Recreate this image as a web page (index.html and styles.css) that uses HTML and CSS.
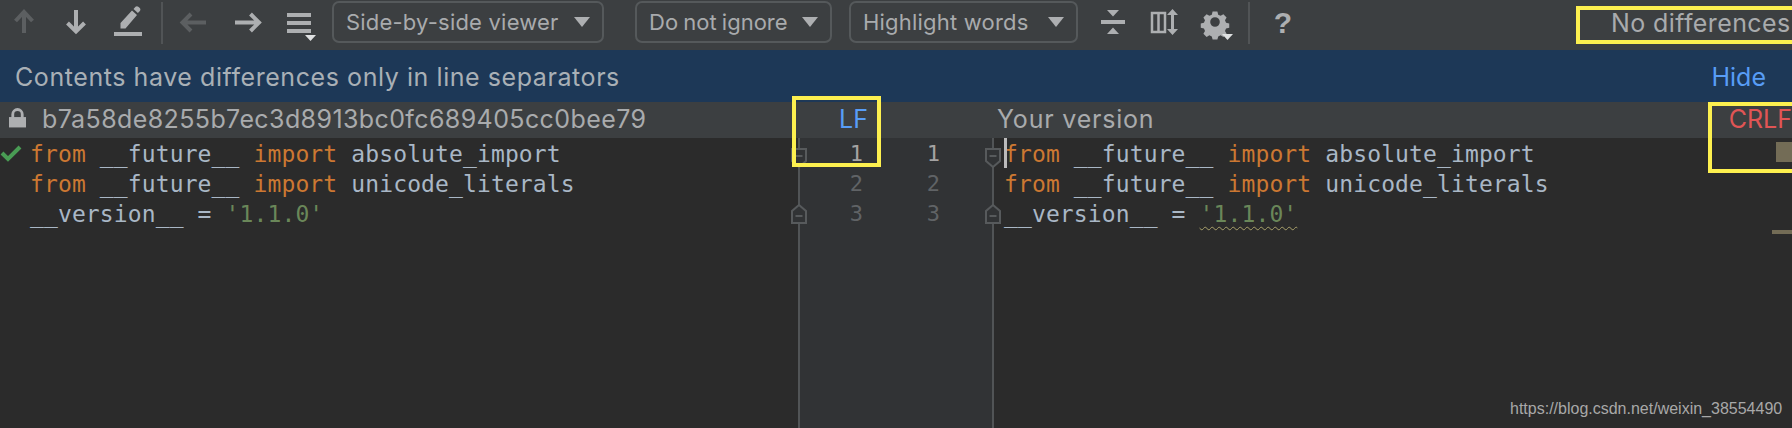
FILE: index.html
```html
<!DOCTYPE html>
<html lang="en">
<head>
<meta charset="utf-8">
<title>Diff viewer</title>
<link rel="stylesheet" href="styles.css">
</head>
<body>
<div class="app">
  <header class="toolbar">
    <svg class="ic ic-first" viewBox="0 0 48 50"><path class="dim" d="M24 33V12M15.500 21L24 12l8.500 9"/></svg>
    <svg class="ic" viewBox="0 0 48 50"><path class="on" d="M24 10v21M15.500 23l8.500 8.500 8.500-8.500"/></svg>
    <svg class="ic" viewBox="0 0 48 50"><path class="fill" d="M10 32h28v4H10zM16.500 28.500v-5.500L28 10.500l5 4.500-11.500 13.500zM29.500 9l2-2.200c.8-.8 2-.8 2.800 0l1.500 1.300c.8.800.8 2 .1 2.800l-2 2.200z"/></svg>
    <span class="sep sep-a"></span>
    <svg class="ic ic-left" viewBox="0 0 48 50"><path class="dim" d="M36 22.500H13M21 14l-8.500 8.500L21 31"/></svg>
    <svg class="ic ic-right" viewBox="0 0 48 50"><path class="on" d="M11 22.500h24M26.500 14l8.500 8.500-8.500 8.500"/></svg>
    <svg class="ic ic-lines" viewBox="0 0 48 50"><path class="fill" d="M12 13h24v4H12zM12 21h24v4H12zM12 29h24v4H12z"/><path class="tri" d="M30 35h11l-5.500 6z"/></svg>
    <div class="drop drop-a"><span>Side-by-side viewer</span><i class="caret"></i></div>
    <div class="drop drop-b"><span>Do not ignore</span><i class="caret"></i></div>
    <div class="drop drop-c"><span>Highlight words</span><i class="caret"></i></div>
    <svg class="ic ic-collapse" viewBox="0 0 48 50"><path class="fill" d="M12 20h24v4H12zM18 10h12l-6 6.500zM18 34h12l-6-6.500z"/></svg>
    <svg class="ic ic-cols" viewBox="0 0 48 50"><path class="thin" d="M10 13h13v19H10zM16.500 13v19"/><path class="fill" d="M30.500 9l5.500 6h-4v14h4l-5.500 6-5.500-6h4V15h-4z"/></svg>
    <svg class="ic ic-gear" viewBox="0 0 48 50"><path class="gear" fill-rule="evenodd" d="M21 10h6l1 4 3 1.300 3.500-2 4 4-2 3.500 1.300 3 4 1v5.400l-4 1-1.300 3 2 3.500-4 4-3.500-2-3 1.300-1 4h-6l-1-4-3-1.300-3.500 2-4-4 2-3.500-1.300-3-4-1v-5.400l4-1 1.300-3-2-3.500 4-4 3.500 2 3-1.300zM24 17a6 6 0 1 0 0 12 6 6 0 0 0 0-12z" transform="translate(4.800 3.600) scale(.8)"/><path class="tri" d="M31 34h11l-5.500 6z"/></svg>
    <span class="sep sep-b"></span>
    <span class="help">?</span>
    <span class="status">No differences</span>
  </header>
  <div class="banner"><span>Contents have differences only in line separators</span><a class="hide">Hide</a></div>
  <div class="titles">
    <div class="title title-left">
      <svg class="lock" viewBox="0 0 18 20"><path d="M0 9h18v11H0z"/><path class="shackle" d="M4 10V6a5 5 0 0 1 10 0v4"/></svg>
      <span class="hash">b7a58de8255b7ec3d8913bc0fc689405cc0bee79</span>
      <b class="lf">LF</b>
    </div>
    <div class="title title-right"><span class="yours">Your version</span><b class="crlf">CRLF</b></div>
  </div>
  <main class="editors">
    <section class="code code-left">
      <svg class="check" viewBox="0 0 22 18"><path d="M2 8l6 6L20 2"/></svg>
      <div class="ln"><span class="k">from</span> __future__ <span class="k">import</span> absolute_import</div>
      <div class="ln"><span class="k">from</span> __future__ <span class="k">import</span> unicode_literals</div>
      <div class="ln">__version__ = <span class="s">'1.1.0'</span></div>
    </section>
    <section class="gutter">
      <div class="nums nums-cur"><span>1</span><span>1</span></div>
      <div class="nums"><span>2</span><span>2</span></div>
      <div class="nums"><span>3</span><span>3</span></div>
      <svg class="fold fold-l1" viewBox="0 0 16 20"><path d="M1 1h14v12l-7 6-7-6zM4.500 8h7"/></svg>
      <svg class="fold fold-l2" viewBox="0 0 16 20"><path d="M1 19h14V7L8 1 1 7zM4.500 12h7"/></svg>
      <svg class="fold fold-r1" viewBox="0 0 16 20"><path d="M1 1h14v12l-7 6-7-6zM4.500 8h7"/></svg>
      <svg class="fold fold-r2" viewBox="0 0 16 20"><path d="M1 19h14V7L8 1 1 7zM4.500 12h7"/></svg>
    </section>
    <section class="code code-right">
      <i class="cursor"></i>
      <div class="ln"><span class="k">from</span> __future__ <span class="k">import</span> absolute_import</div>
      <div class="ln"><span class="k">from</span> __future__ <span class="k">import</span> unicode_literals</div>
      <div class="ln">__version__ = <span class="s warn">'1.1.0'</span></div>
      <i class="mark mark-a"></i>
      <i class="mark mark-b"></i>
    </section>
  </main>
  <div class="hl hl-status"></div>
  <div class="hl hl-lf"></div>
  <div class="hl hl-crlf"></div>
  <div class="watermark">https://blog.csdn.net/weixin_38554490</div>
</div>
</body>
</html>
```
FILE: styles.css
```css
* { box-sizing: border-box; }
html, body { margin: 0; padding: 0; background: #2b2b2b; }
.app {
  position: relative;
  width: 1792px;
  height: 428px;
  overflow: hidden;
  display: flex;
  flex-direction: column;
  font-family: Inter, "Liberation Sans", sans-serif;
  color: #a9abad;
}
.toolbar {
  height: 50px;
  flex: none;
  display: flex;
  align-items: flex-start;
  background: #3c3f41;
}
.ic { width: 48px; height: 50px; flex: none; margin-right: 4px; }
.ic path { fill: none; }
.ic .dim { stroke: #5c5f61; stroke-width: 4; }
.ic .on { stroke: #adafb1; stroke-width: 4; }
.ic .fill { fill: #adafb1; }
.ic .tri { fill: #dfe1e2; }
.ic .gear { fill: #adafb1; }
.ic .thin { stroke: #adafb1; stroke-width: 2.500; }
.sep { width: 2px; height: 42px; margin-top: 2px; background: #515456; flex: none; }
.sep-a { margin-left: 5px; margin-right: 7px; }
.ic-left { margin-right: 6px; }
.ic-right { margin-right: 3px; }
.ic-lines { margin-right: 9px; }
.drop {
  height: 42px;
  margin-top: 1px;
  flex: none;
  display: flex;
  align-items: center;
  justify-content: space-between;
  padding: 0 12px 0 12px;
  border: 2px solid #55595b;
  border-radius: 7px;
  font-size: 22px;
  letter-spacing: .2px;
  color: #a9abad;
}
.drop-a { width: 272px; margin-right: 31px; }
.drop-b { width: 197px; margin-right: 17px; word-spacing: -1px; letter-spacing: 0; }
.drop-c { width: 229px; margin-right: 11px; }
.caret {
  width: 0; height: 0;
  border-left: 8.500px solid transparent;
  border-right: 8.500px solid transparent;
  border-top: 10px solid #adafb1;
}
.ic-collapse { margin-right: 5px; }
.ic-cols { margin-right: 1px; }
.ic-gear { margin-right: 9px; }
.help {
  width: 66px;
  text-align: center;
  font-family: "Liberation Sans", sans-serif;
  font-weight: 700;
  font-size: 30px;
  line-height: 46px;
  color: #adafb1;
}
.status {
  margin-left: auto;
  width: 181px;
  font-size: 25px;
  line-height: 47px;
  white-space: nowrap;
  letter-spacing: .4px;
  color: #a9abad;
}
.banner {
  height: 52px;
  flex: none;
  display: flex;
  align-items: center;
  justify-content: space-between;
  padding: 2px 26px 0 15px;
  background: #1d3857;
  font-size: 25px;
  letter-spacing: .57px;
  color: #a9b0b6;
}
.hide { color: #589df6; letter-spacing: 0; }
.titles {
  height: 36px;
  flex: none;
  display: grid;
  grid-template-columns: 994px 1fr;
  background: #3c3f41;
  font-size: 25px;
  line-height: 34px;
  color: #a9abad;
}
.title { display: flex; align-items: flex-start; white-space: nowrap; position: relative; }
.title b { font-weight: 400; margin-left: auto; }
.hash { letter-spacing: .4px; }
.yours { letter-spacing: .8px; }
.title-left { padding-left: 9px; padding-right: 126px; }
.title-left .lock { width: 17px; height: 20px; margin: 6px 16px 0 0; flex: none; }
.lock path { fill: #adafb1; }
.lock .shackle { fill: none; stroke: #adafb1; stroke-width: 3; }
.title-right { padding-left: 3px; }
.lf { color: #589df6; }
.crlf { color: #e05555; }
.editors {
  flex: 1;
  display: grid;
  grid-template-columns: 798px 196px 1fr;
  background: #2b2b2b;
}
.code {
  position: relative;
  padding-top: 1px;
  font-family: "DejaVu Sans Mono", "Liberation Mono", monospace;
  font-size: 23px;
  letter-spacing: .12px;
  color: #a9b7c6;
}
.code-left { padding-left: 30px; }
.code-right { padding-left: 10px; }
.ln { height: 30px; line-height: 30px; white-space: pre; }
.k { color: #cc7832; }
.s { color: #6a8759; }
.warn { text-decoration: underline wavy #a8a06a 1px; text-underline-offset: 4px; }
.check { position: absolute; left: 0; top: 7px; width: 22px; height: 18px; }
.check path { fill: none; stroke: #499c54; stroke-width: 4; }
.gutter {
  position: relative;
  padding-top: 1px;
  background: #313335;
  border-left: 2px solid #515456;
  border-right: 2px solid #515456;
  font-family: "DejaVu Sans Mono", monospace;
  font-size: 22px;
  color: #606366;
}
.nums { height: 30px; line-height: 30px; display: grid; grid-template-columns: 63px 77px; justify-content: start; }
.nums span { text-align: right; }
.nums-cur { color: #a4a3a3; }
.fold { position: absolute; width: 16px; height: 20px; background: transparent; }
.fold path { fill: #313335; stroke: #575a5c; stroke-width: 2; }
.fold-l1 { left: -9px; top: 10px; }
.fold-l2 { left: -9px; top: 66px; }
.fold-r1 { right: -9px; top: 10px; }
.fold-r2 { right: -9px; top: 66px; }
.cursor { position: absolute; left: 10px; top: 0; width: 3px; height: 30px; background: #bbbbbb; }
.mark { position: absolute; background: #736c56; right: 0; }
.mark-a { top: 4px; width: 16px; height: 20px; }
.mark-b { top: 92px; width: 20px; height: 4px; }
.hl { position: absolute; border: 4px solid #fdf04f; pointer-events: none; }
.hl-status { left: 1576px; top: 6px; width: 230px; height: 38px; }
.hl-lf { left: 792px; top: 96px; width: 89px; height: 71px; }
.hl-crlf { left: 1708px; top: 102px; width: 100px; height: 71px; }
.watermark {
  position: absolute;
  left: 1510px;
  top: 399px;
  font-family: "Liberation Sans", Arial, sans-serif;
  font-size: 16px;
  line-height: 20px;
  color: #a8a8a8;
  white-space: nowrap;
}
```
